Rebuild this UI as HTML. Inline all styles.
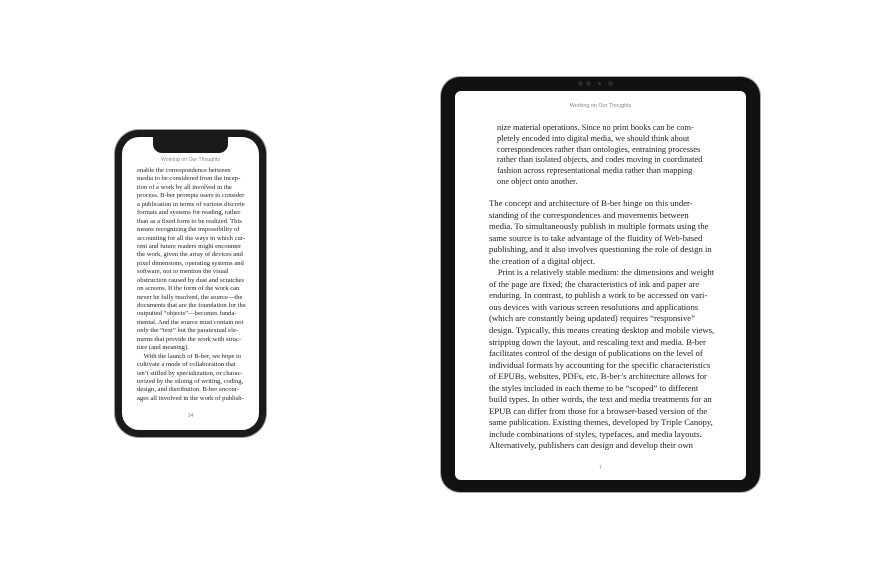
<!DOCTYPE html>
<html><head><meta charset="utf-8"><style>
body{margin:0;width:875px;height:568px;background:#fff;position:relative;overflow:hidden;font-family:"Liberation Serif",serif;color:#222}
.abs{position:absolute}
.ph{left:115px;top:130px;width:151px;height:307px;background:#1a1a1a;border-radius:24px;box-shadow:0 0 0 1px #9a9a9a}
.phs{left:122px;top:137px;width:137px;height:293px;background:#fff;border-radius:17px}
.notch{left:153px;top:137px;width:75px;height:16px;background:#1a1a1a;border-radius:0 0 9px 9px}
.ip{left:441px;top:77px;width:319px;height:415px;background:#111;border-radius:19px;box-shadow:0 0 0 1px #aaa}
.ips{left:455px;top:91px;width:291px;height:389px;background:#fff;border-radius:6px}
.hd{font-family:"Liberation Sans",sans-serif;color:#888;text-align:center}
.pt div{white-space:nowrap;font-size:6.6px;height:8.45px;line-height:8.45px}
.it div{white-space:nowrap;font-size:8.7px;height:11.55px;line-height:11.55px}
.iq div{white-space:nowrap;font-size:8.4px;height:10.8px;line-height:10.8px}
</style></head><body>
<div class="abs ph"></div><div class="abs phs"></div><div class="abs notch"></div>
<div class="abs hd" style="left:122px;top:157px;width:137px;font-size:5.2px">Working on Our Thoughts</div>
<div class="abs pt" style="left:137px;top:167px">
<div>enable the correspondence between</div>
<div>media to be considered from the incep-</div>
<div>tion of a work by all involved in the</div>
<div>process. B-ber prompts users to consider</div>
<div>a publication in terms of various discrete</div>
<div>formats and systems for reading, rather</div>
<div>than as a fixed form to be realized. This</div>
<div>means recognizing the impossibility of</div>
<div>accounting for all the ways in which cur-</div>
<div>rent and future readers might encounter</div>
<div>the work, given the array of devices and</div>
<div>pixel dimensions, operating systems and</div>
<div>software, not to mention the visual</div>
<div>obstruction caused by dust and scratches</div>
<div>on screens. If the form of the work can</div>
<div>never be fully resolved, the source—the</div>
<div>documents that are the foundation for the</div>
<div>outputted “objects”—becomes funda-</div>
<div>mental. And the source must contain not</div>
<div>only the “text” but the paratextual ele-</div>
<div>ments that provide the work with struc-</div>
<div>ture (and meaning).</div>
<div>&nbsp;&nbsp;&nbsp;&nbsp;With the launch of B-ber, we hope to</div>
<div>cultivate a mode of collaboration that</div>
<div>isn’t stifled by specialization, or charac-</div>
<div>terized by the siloing of writing, coding,</div>
<div>design, and distribution. B-ber encour-</div>
<div>ages all involved in the work of publish-</div>
</div>
<div class="abs hd" style="left:122px;top:413px;width:137px;font-size:5.2px">14</div>

<div class="abs ip"></div><div class="abs ips"></div>
<div class="abs" style="left:578px;top:81px;width:5px;height:5px;border-radius:50%;background:#2a2a2a"></div>
<div class="abs" style="left:586px;top:81px;width:5px;height:5px;border-radius:50%;background:#2a2a2a"></div>
<div class="abs" style="left:598px;top:82px;width:3px;height:3px;border-radius:50%;background:#1d3a55"></div>
<div class="abs" style="left:608px;top:81px;width:5px;height:5px;border-radius:50%;background:#2a2a2a"></div>
<div class="abs hd" style="left:455px;top:103px;width:291px;font-size:5.4px">Working on Our Thoughts</div>
<div class="abs iq" style="left:497px;top:123px">
<div>nize material operations. Since no print books can be com-</div>
<div>pletely encoded into digital media, we should think about</div>
<div>correspondences rather than ontologies, entraining processes</div>
<div>rather than isolated objects, and codes moving in coordinated</div>
<div>fashion across representational media rather than mapping</div>
<div>one object onto another.</div>
</div>
<div class="abs it" style="left:489px;top:198px">
<div>The concept and architecture of B-ber hinge on this under-</div>
<div>standing of the correspondences and movements between</div>
<div>media. To simultaneously publish in multiple formats using the</div>
<div>same source is to take advantage of the fluidity of Web-based</div>
<div>publishing, and it also involves questioning the role of design in</div>
<div>the creation of a digital object.</div>
<div>&nbsp;&nbsp;&nbsp;&nbsp;Print is a relatively stable medium: the dimensions and weight</div>
<div>of the page are fixed; the characteristics of ink and paper are</div>
<div>enduring. In contrast, to publish a work to be accessed on vari-</div>
<div>ous devices with various screen resolutions and applications</div>
<div>(which are constantly being updated) requires “responsive”</div>
<div>design. Typically, this means creating desktop and mobile views,</div>
<div>stripping down the layout, and rescaling text and media. B-ber</div>
<div>facilitates control of the design of publications on the level of</div>
<div>individual formats by accounting for the specific characteristics</div>
<div>of EPUBs, websites, PDFs, etc. B-ber’s architecture allows for</div>
<div>the styles included in each theme to be “scoped” to different</div>
<div>build types. In other words, the text and media treatments for an</div>
<div>EPUB can differ from those for a browser-based version of the</div>
<div>same publication. Existing themes, developed by Triple Canopy,</div>
<div>include combinations of styles, typefaces, and media layouts.</div>
<div>Alternatively, publishers can design and develop their own</div>
</div>
<div class="abs hd" style="left:455px;top:465px;width:291px;font-size:5.4px">7</div>
</body></html>
